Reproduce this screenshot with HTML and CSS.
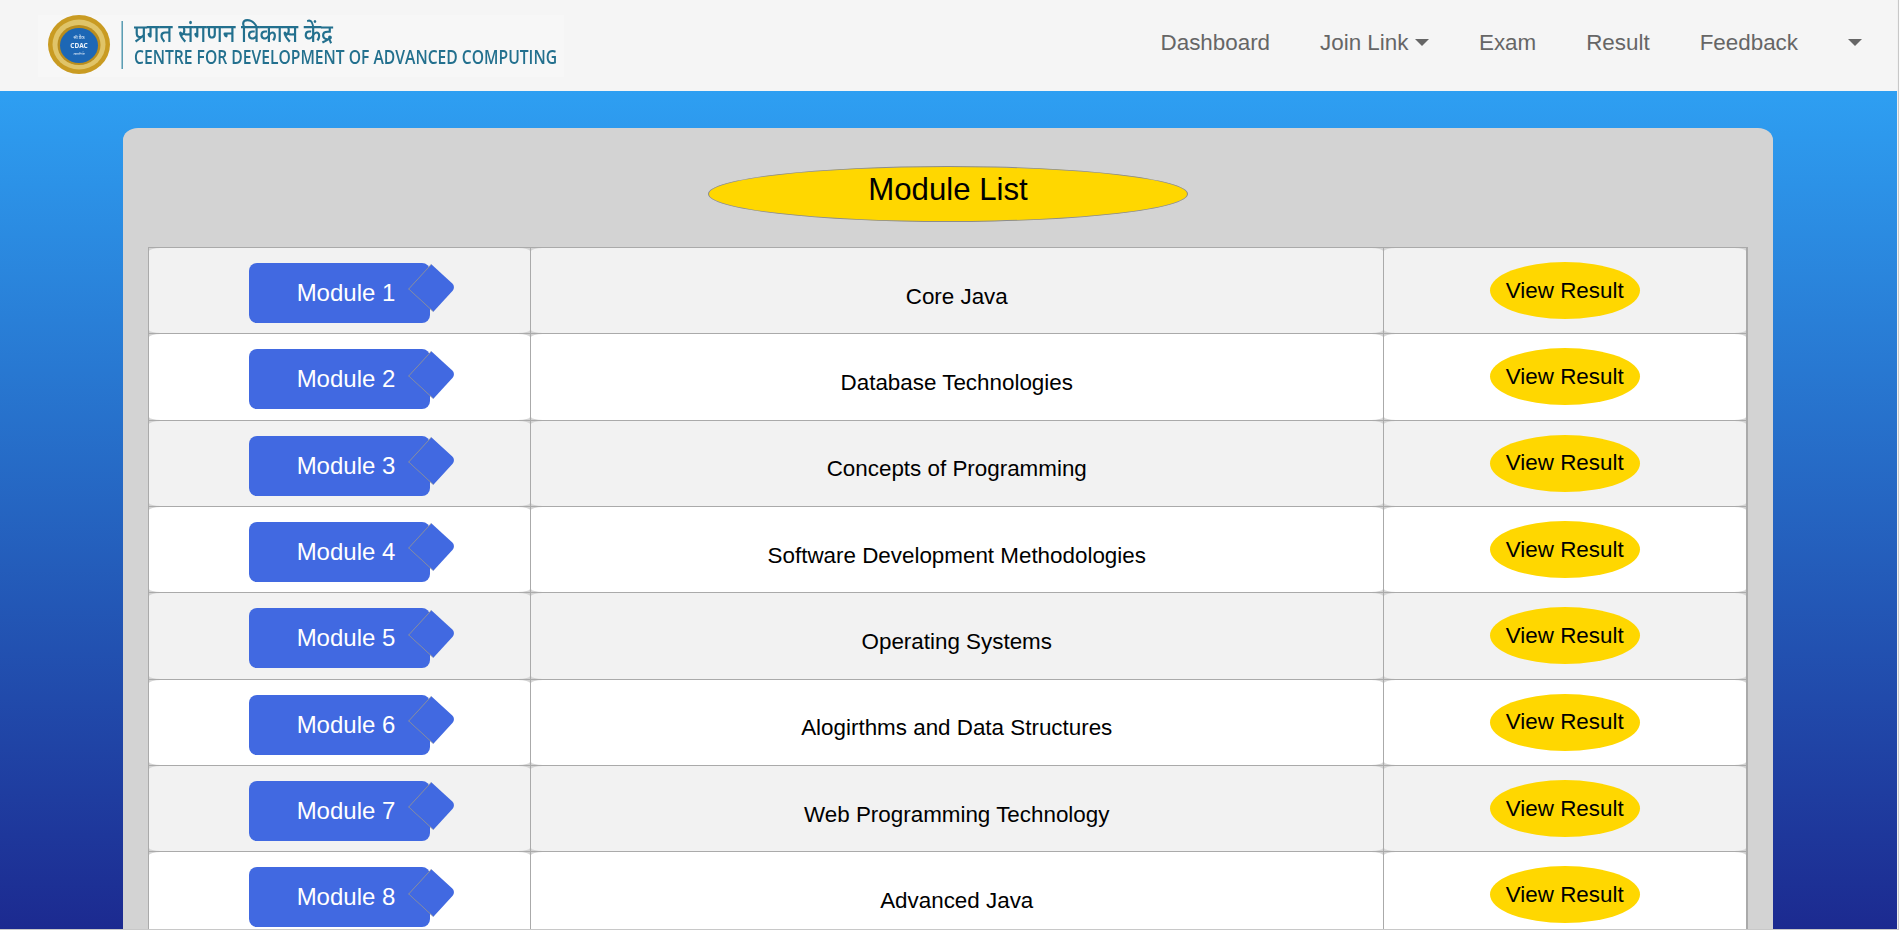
FILE: index.html
```html
<!DOCTYPE html>
<html lang="en">
<head>
<meta charset="utf-8">
<title>Module List</title>
<link rel="stylesheet" href="styles.css">
</head>
<body>
<div class="page">
  <header class="navbar">
    <a class="brand" href="#" aria-label="C-DAC">
      <svg class="logo" viewBox="0 0 526 62" width="526" height="62">
        <g class="logo-art">
          <ellipse class="seal-outer" cx="41" cy="29.5" rx="31" ry="29.5"/>
          <ellipse class="seal-ring" cx="41" cy="29.5" rx="26.5" ry="25"/>
          <ellipse class="seal-inner" cx="41" cy="30" rx="21.5" ry="20"/>
          <ellipse class="seal-blue" cx="41" cy="30.5" rx="19" ry="17.5"/>
          <text class="seal-text" x="41" y="24" text-anchor="middle" font-size="4.5">सी डैक</text>
          <text class="seal-text seal-cdac" x="41" y="33" text-anchor="middle" font-size="6.5">CDAC</text>
          <text class="seal-text" x="41" y="39.5" text-anchor="middle" font-size="3">आत्मनिर्भर</text>
          <rect class="logo-rule" x="83.5" y="6" width="1.4" height="48"/>
          <text class="logo-hi" x="96" y="27" textLength="199" lengthAdjust="spacingAndGlyphs">प्रगत संगणन विकास केंद्र</text>
          <text class="logo-en" x="96" y="49" textLength="423" lengthAdjust="spacingAndGlyphs">CENTRE FOR DEVELOPMENT OF ADVANCED COMPUTING</text>
        </g>
      </svg>
    </a>
    <nav class="nav">
      <a class="nav-link" href="#">Dashboard</a>
      <a class="nav-link has-caret" href="#">Join Link</a>
      <a class="nav-link" href="#">Exam</a>
      <a class="nav-link" href="#">Result</a>
      <a class="nav-link" href="#">Feedback</a>
      <a class="nav-link has-caret caret-only" href="#" aria-label="Account"></a>
    </nav>
  </header>
  <main class="main">
    <section class="card">
      <h1 class="title">Module List</h1>
      <table class="modules">
        <colgroup><col class="col-a"><col class="col-b"><col class="col-c"></colgroup>
        <tbody>
          <tr><td><a class="badge" href="#">Module 1</a></td><td class="name">Core Java</td><td><a class="pill" href="#">View Result</a></td></tr>
          <tr><td><a class="badge" href="#">Module 2</a></td><td class="name">Database Technologies</td><td><a class="pill" href="#">View Result</a></td></tr>
          <tr><td><a class="badge" href="#">Module 3</a></td><td class="name">Concepts of Programming</td><td><a class="pill" href="#">View Result</a></td></tr>
          <tr><td><a class="badge" href="#">Module 4</a></td><td class="name">Software Development Methodologies</td><td><a class="pill" href="#">View Result</a></td></tr>
          <tr><td><a class="badge" href="#">Module 5</a></td><td class="name">Operating Systems</td><td><a class="pill" href="#">View Result</a></td></tr>
          <tr><td><a class="badge" href="#">Module 6</a></td><td class="name">Alogirthms and Data Structures</td><td><a class="pill" href="#">View Result</a></td></tr>
          <tr><td><a class="badge" href="#">Module 7</a></td><td class="name">Web Programming Technology</td><td><a class="pill" href="#">View Result</a></td></tr>
          <tr><td><a class="badge" href="#">Module 8</a></td><td class="name">Advanced Java</td><td><a class="pill" href="#">View Result</a></td></tr>
        </tbody>
      </table>
    </section>
  </main>
</div>
</body>
</html>
```
FILE: styles.css
```css
* { box-sizing: border-box; }
html, body { margin: 0; height: 100%; overflow: hidden; }
body {
  background: #c8c8c8;
  border-right: 1px solid #fdfdfd;
  padding: 0 1px 1px 0;
  font-family: "Liberation Sans", Arial, sans-serif;
  color: #000;
}
a { color: inherit; text-decoration: none; }

.page {
  height: 100%;
  display: flex;
  flex-direction: column;
  overflow: hidden;
  border-right: 1px solid #f1f1f1;
}

/* Top bar */
.navbar {
  flex: none;
  height: 91px;
  background: #f5f5f5;
  display: flex;
  align-items: center;
  justify-content: space-between;
  padding: 0 35px 0 38px;
}
.brand { display: block; height: 62px; }
.logo { display: block; background: #f7f7f7; }
.logo-art { filter: blur(0.35px); }
.seal-outer { fill: #c99b22; }
.seal-ring { fill: #e0c468; }
.seal-inner { fill: #b98d1e; }
.seal-blue { fill: #1d67b5; }
.seal-text { fill: #eaf2fb; font-family: "Noto Sans", "Noto Sans Devanagari", "Liberation Sans", sans-serif; }
.seal-cdac { font-weight: 700; }
.logo-rule { fill: #4b93ab; }
.logo-hi { fill: #23708e; font-family: "Noto Sans Devanagari", "Noto Sans", "Lohit Devanagari", sans-serif; font-size: 25px; font-weight: 500; }
.logo-en { fill: #23708e; font-family: "Open Sans", "Liberation Sans", sans-serif; font-size: 20.5px; font-weight: 600; }

.nav { display: flex; align-items: center; padding-bottom: 6px; }
.nav-link {
  padding: 0 25px;
  font-size: 22.4px;
  line-height: 34px;
  color: #666;
  display: flex;
  align-items: center;
}
.nav-link:last-child { padding-right: 0; }
.has-caret::after {
  content: "";
  margin-left: 6.5px;
  border-top: 7px solid currentColor;
  border-left: 7px solid transparent;
  border-right: 7px solid transparent;
}
.caret-only::after { margin-left: 0; }

/* Content */
.main {
  flex: 1;
  min-height: 0;
  padding: 37px 124px 0 123px;
  background: linear-gradient(to bottom, #2e9ff2, #1c2a90);
}
.card {
  isolation: isolate;
  background: #d3d3d3;
  border-radius: 15px 15px 0 0 / 12px 12px 0 0;
  padding: 38px 25px 25px;
}
.title {
  margin: 0 auto 25px;
  width: 480px;
  height: 56px;
  padding-bottom: 8px;
  display: flex;
  align-items: center;
  justify-content: center;
  background: #ffd700;
  border: 1px solid #8c8c8c;
  border-radius: 50%;
  font-size: 31.2px;
  font-weight: 400;
}

/* Table */
.modules {
  width: 100%;
  table-layout: fixed;
  border-collapse: collapse;
  font-size: 22.4px;
}
.col-a { width: 382px; }
.col-c { width: 364px; }
.modules td {
  position: relative;
  height: 86.33px;
  padding: 0;
  text-align: center;
  vertical-align: middle;
  border: 1px solid #aaa;
}
.modules td:last-child { border-right-width: 2px; }
/* Each cell's rounded fill sits behind its straight grid lines */
.modules td::before {
  content: "";
  position: absolute;
  inset: 0;
  z-index: -1;
  background: #fff;
  border-radius: 12px / 3px;
}
.modules tr:nth-child(odd) td::before { background: #f2f2f2; }
.modules td.name { padding-top: 12px; }

.badge {
  position: relative;
  display: flex;
  align-items: center;
  justify-content: center;
  width: 181px;
  height: 60px;
  margin: 4.5px auto 0;
  padding-left: 13px;
  background: #4169e1;
  border-radius: 8px;
  color: #fff;
  font-size: 24px;
}
.badge::after {
  content: "";
  position: absolute;
  top: 8.5px;
  left: 165.5px;
  width: 33px;
  height: 33px;
  background: #4169e1;
  border-left: 1px solid #8a8f9c;
  border-bottom: 1px solid #8a8f9c;
  border-radius: 0 5px 0 0;
  transform: rotate(42.5deg);
}
.pill {
  display: flex;
  align-items: center;
  justify-content: center;
  width: 150px;
  height: 57px;
  margin: 0 auto;
  background: #ffd700;
  border-radius: 50%;
}
```
